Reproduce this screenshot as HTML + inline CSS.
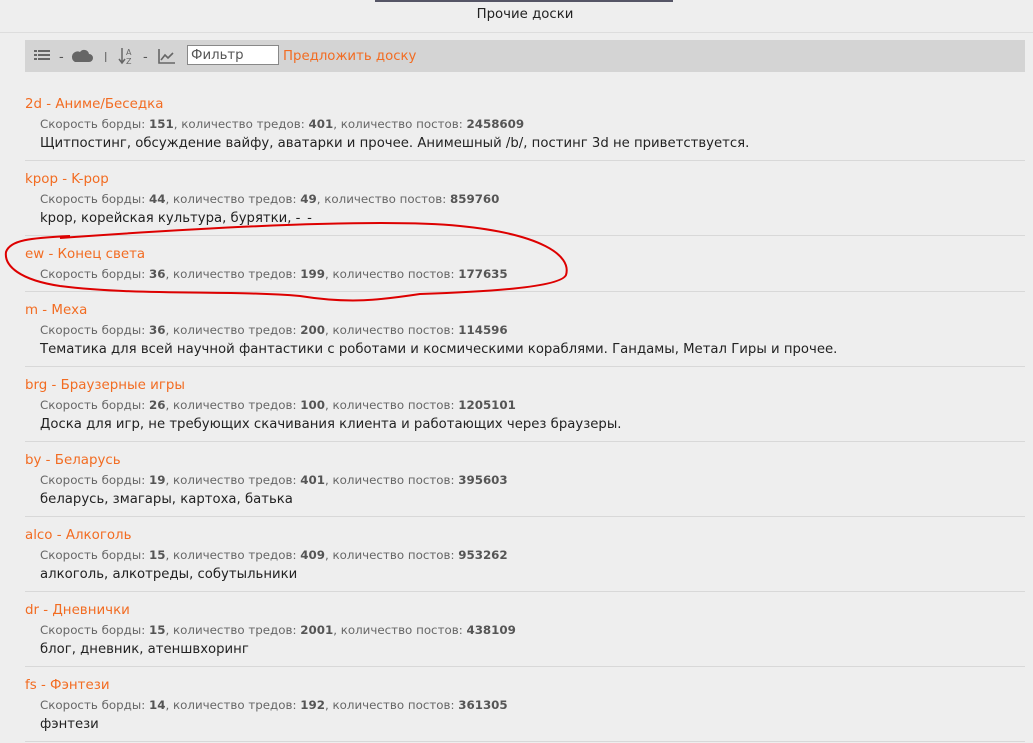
<!DOCTYPE html>
<html><head><meta charset="utf-8"><style>
body{margin:0;background:#eeeeee;font-family:"DejaVu Sans",Verdana,sans-serif;width:1033px;height:743px;overflow:hidden;position:relative;color:#333}
.top{position:absolute;left:375px;top:0;width:298px;height:2px;background:#556}
.cap{position:absolute;top:7px;left:0;width:1050px;text-align:center;font-size:13.3px;color:#222}
.hr{position:absolute;top:32px;left:0;right:0;height:1px;background:#ddd}
.bar{position:absolute;left:25px;top:40px;width:1000px;height:32px;background:#d4d4d4}
.bar input{position:absolute;left:162px;top:5px;width:84px;height:18px;border:1px solid #888;background:#fff;font:13.3px "DejaVu Sans",sans-serif;padding:0 3px;color:#555}
.sug{position:absolute;left:258px;top:9px;color:#f26c22;font-size:13.3px}
.e{position:absolute;left:25px;width:1000px;border-bottom:1px solid #d8d8d8}
.t{color:#f26c22;font-size:13.4px;margin-top:2px}
.s{color:#666;font-size:11.85px;margin:5px 0 0 15px}
.s b{color:#555}
.d{color:#222;font-size:13.25px;margin:5px 0 0 15px}
</style></head><body>
<div class="top"></div><div class="cap">Прочие доски</div><div class="hr"></div>
<div class="bar">
<svg width="150" height="32" style="position:absolute;left:0;top:0" fill="#666">
<rect x="9" y="10" width="3" height="2"/><rect x="13" y="10" width="12" height="2"/>
<rect x="9" y="14" width="3" height="2"/><rect x="13" y="14" width="12" height="2"/>
<rect x="9" y="18" width="3" height="2"/><rect x="13" y="18" width="12" height="2"/>
<text x="34" y="21" font-size="13" fill="#555">-</text>
<path d="M50 22h14a4 4 0 0 0 0-8a5 5 0 0 0-9-2a4 4 0 0 0-5 10z"/>
<rect x="80" y="12" width="1.3" height="10" fill="#777"/>
<path d="M97 8v14M94 19l3 4 3-4" stroke="#666" stroke-width="1.5" fill="none"/>
<text x="101" y="15" font-size="8">A</text><text x="101" y="24" font-size="8">Z</text>
<text x="118" y="21" font-size="13" fill="#555">-</text>
<path d="M134 9v14h17M136 20l4-5 3 3 5-5" stroke="#666" stroke-width="1.6" fill="none"/>
</svg>
<input value="Фильтр"><span class="sug">Предложить доску</span></div>

<div class="e" style="top:95px;height:65px"><div class="t">2d - Аниме/Беседка</div><div class="s">Скорость борды: <b>151</b>, количество тредов: <b>401</b>, количество постов: <b>2458609</b></div><div class="d">Щитпостинг, обсуждение вайфу, аватарки и прочее. Анимешный /b/, постинг 3d не приветствуется.</div></div>
<div class="e" style="top:170px;height:65px"><div class="t">kpop - K-pop</div><div class="s">Скорость борды: <b>44</b>, количество тредов: <b>49</b>, количество постов: <b>859760</b></div><div class="d">kpop, корейская культура, бурятки, -_-</div></div>
<div class="e" style="top:245px;height:46px"><div class="t">ew - Конец света</div><div class="s">Скорость борды: <b>36</b>, количество тредов: <b>199</b>, количество постов: <b>177635</b></div></div>
<div class="e" style="top:301px;height:65px"><div class="t">m - Меха</div><div class="s">Скорость борды: <b>36</b>, количество тредов: <b>200</b>, количество постов: <b>114596</b></div><div class="d">Тематика для всей научной фантастики с роботами и космическими кораблями. Гандамы, Метал Гиры и прочее.</div></div>
<div class="e" style="top:376px;height:65px"><div class="t">brg - Браузерные игры</div><div class="s">Скорость борды: <b>26</b>, количество тредов: <b>100</b>, количество постов: <b>1205101</b></div><div class="d">Доска для игр, не требующих скачивания клиента и работающих через браузеры.</div></div>
<div class="e" style="top:451px;height:65px"><div class="t">by - Беларусь</div><div class="s">Скорость борды: <b>19</b>, количество тредов: <b>401</b>, количество постов: <b>395603</b></div><div class="d">беларусь, змагары, картоха, батька</div></div>
<div class="e" style="top:526px;height:65px"><div class="t">alco - Алкоголь</div><div class="s">Скорость борды: <b>15</b>, количество тредов: <b>409</b>, количество постов: <b>953262</b></div><div class="d">алкоголь, алкотреды, собутыльники</div></div>
<div class="e" style="top:601px;height:65px"><div class="t">dr - Дневнички</div><div class="s">Скорость борды: <b>15</b>, количество тредов: <b>2001</b>, количество постов: <b>438109</b></div><div class="d">блог, дневник, атеншвхоринг</div></div>
<div class="e" style="top:676px;height:65px"><div class="t">fs - Фэнтези</div><div class="s">Скорость борды: <b>14</b>, количество тредов: <b>192</b>, количество постов: <b>361305</b></div><div class="d">фэнтези</div></div>

<svg width="1033" height="743" style="position:absolute;left:0;top:0;pointer-events:none">
<path d="M60 238C200 228 380 218 460 226C540 234 572 255 566 275C560 288 480 292 420 294C380 300 350 304 300 296C230 290 140 296 60 286C20 280 4 266 6 252C10 240 30 238 70 236" fill="none" stroke="#d00" stroke-width="2"/>
</svg>
</body></html>
